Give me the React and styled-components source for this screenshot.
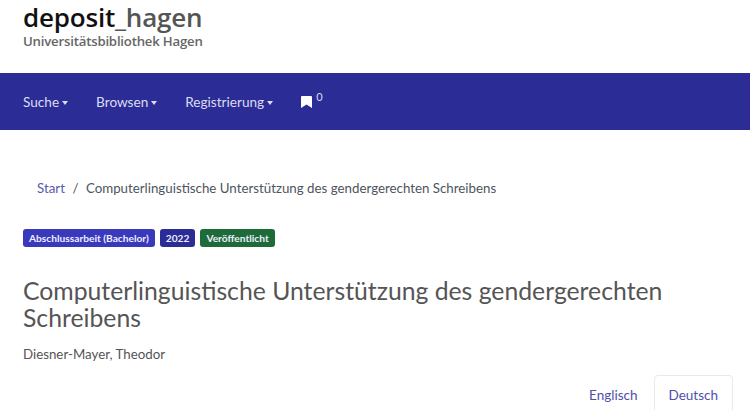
import React from 'react'
import styled, { createGlobalStyle } from 'styled-components'

const GlobalStyle = createGlobalStyle`
  html, body {
    margin: 0;
    padding: 0;
    background: #fff;
    overflow: hidden;
  }
  body {
    font-family: Lato, "Liberation Sans", sans-serif;
    font-size: 13px;
    color: #555;
  }
`;

const Page = styled.div`
  width: 750px;
  height: 410px;
  overflow: hidden;
`;

const Header = styled.header`
  height: 73px;
  padding: 3px 23px 0;
  box-sizing: border-box;
`;

const LogoName = styled.div`
  font-family: "Open Sans", sans-serif;
  font-size: 26px;
  line-height: 28px;
  height: 28px;
  font-weight: 600;
  color: #111;
  letter-spacing: -0.2px;
  span { color: #555; }
`;

const LogoSub = styled.div`
  font-family: "Open Sans", sans-serif;
  font-size: 13.2px;
  line-height: 15px;
  font-weight: 600;
  color: #666;
  letter-spacing: -0.2px;
  margin-top: 3px;
`;

const Navbar = styled.nav`
  height: 57px;
  background: #2c2c96;
  display: flex;
  align-items: center;
  padding: 0 23px;
  gap: 28px;
`;

const NavItem = styled.a`
  display: flex;
  align-items: center;
  gap: 3px;
  color: #dcdcf0;
  font-size: 13.6px;
`;

const Caret = styled.span`
  width: 0;
  height: 0;
  margin-top: 2px;
  border-left: 3.5px solid transparent;
  border-right: 3.5px solid transparent;
  border-top: 4px solid #dcdcf0;
`;

const BookmarkItem = styled.a`
  display: flex;
  align-items: flex-start;
  gap: 4px;
  color: #dcdcf0;
  sup { font-size: 11px; line-height: 10px; margin-top: -4px; }
`;

const Breadcrumb = styled.div`
  display: flex;
  gap: 7.5px;
  padding: 50px 37px 0;
  font-size: 13.3px;
  line-height: 16px;
  color: #4d5560;
  a { color: #5a5aac; }
`;

const Badges = styled.div`
  display: flex;
  gap: 5px;
  padding: 33px 23px 0;
`;

const Badge = styled.span`
  background: ${p => p.$bg};
  color: #eef;
  font-size: 10.2px;
  font-weight: 700;
  line-height: 12px;
  padding: 3px 6px;
  border-radius: 3px;
`;

const Title = styled.h1`
  margin: 0;
  padding: 30px 23px 0;
  font-size: 24.75px;
  line-height: 27px;
  font-weight: 400;
  color: #555;
`;

const Author = styled.div`
  padding: 15px 23px 0;
  font-size: 13.3px;
  line-height: 16px;
  color: #555;
`;

const Tabs = styled.div`
  display: flex;
  justify-content: flex-end;
  gap: 1px;
  padding: 13px 17px 0 0;
`;

const Tab = styled.a`
  padding: 11px 14px;
  font-size: 13.5px;
  line-height: 17px;
  color: #4f4fa8;
  border: 1px solid ${p => (p.$active ? '#e8e8ee' : 'transparent')};
  border-radius: 4px 4px 0 0;
`;

export default function App() {
  return (
    <Page>
      <GlobalStyle />
      <Header>
        <LogoName>deposit<span>_hagen</span></LogoName>
        <LogoSub>Universitätsbibliothek Hagen</LogoSub>
      </Header>
      <Navbar>
        <NavItem>Suche<Caret /></NavItem>
        <NavItem>Browsen<Caret /></NavItem>
        <NavItem>Registrierung<Caret /></NavItem>
        <BookmarkItem>
          <svg width="11" height="12" viewBox="0 0 11 12" fill="#fff">
            <path d="M0 1a1 1 0 0 1 1-1h9a1 1 0 0 1 1 1v11L5.5 8.6 0 12z" />
          </svg>
          <sup>0</sup>
        </BookmarkItem>
      </Navbar>
      <Breadcrumb>
        <a>Start</a>
        <span>/</span>
        <span>Computerlinguistische Unterstützung des gendergerechten Schreibens</span>
      </Breadcrumb>
      <Badges>
        <Badge $bg="#3939bb">Abschlussarbeit (Bachelor)</Badge>
        <Badge $bg="#2c2c96">2022</Badge>
        <Badge $bg="#1e6b3a">Veröffentlicht</Badge>
      </Badges>
      <Title>Computerlinguistische Unterstützung des gendergerechten Schreibens</Title>
      <Author>Diesner-Mayer, Theodor</Author>
      <Tabs>
        <Tab>Englisch</Tab>
        <Tab $active>Deutsch</Tab>
      </Tabs>
    </Page>
  )
}
